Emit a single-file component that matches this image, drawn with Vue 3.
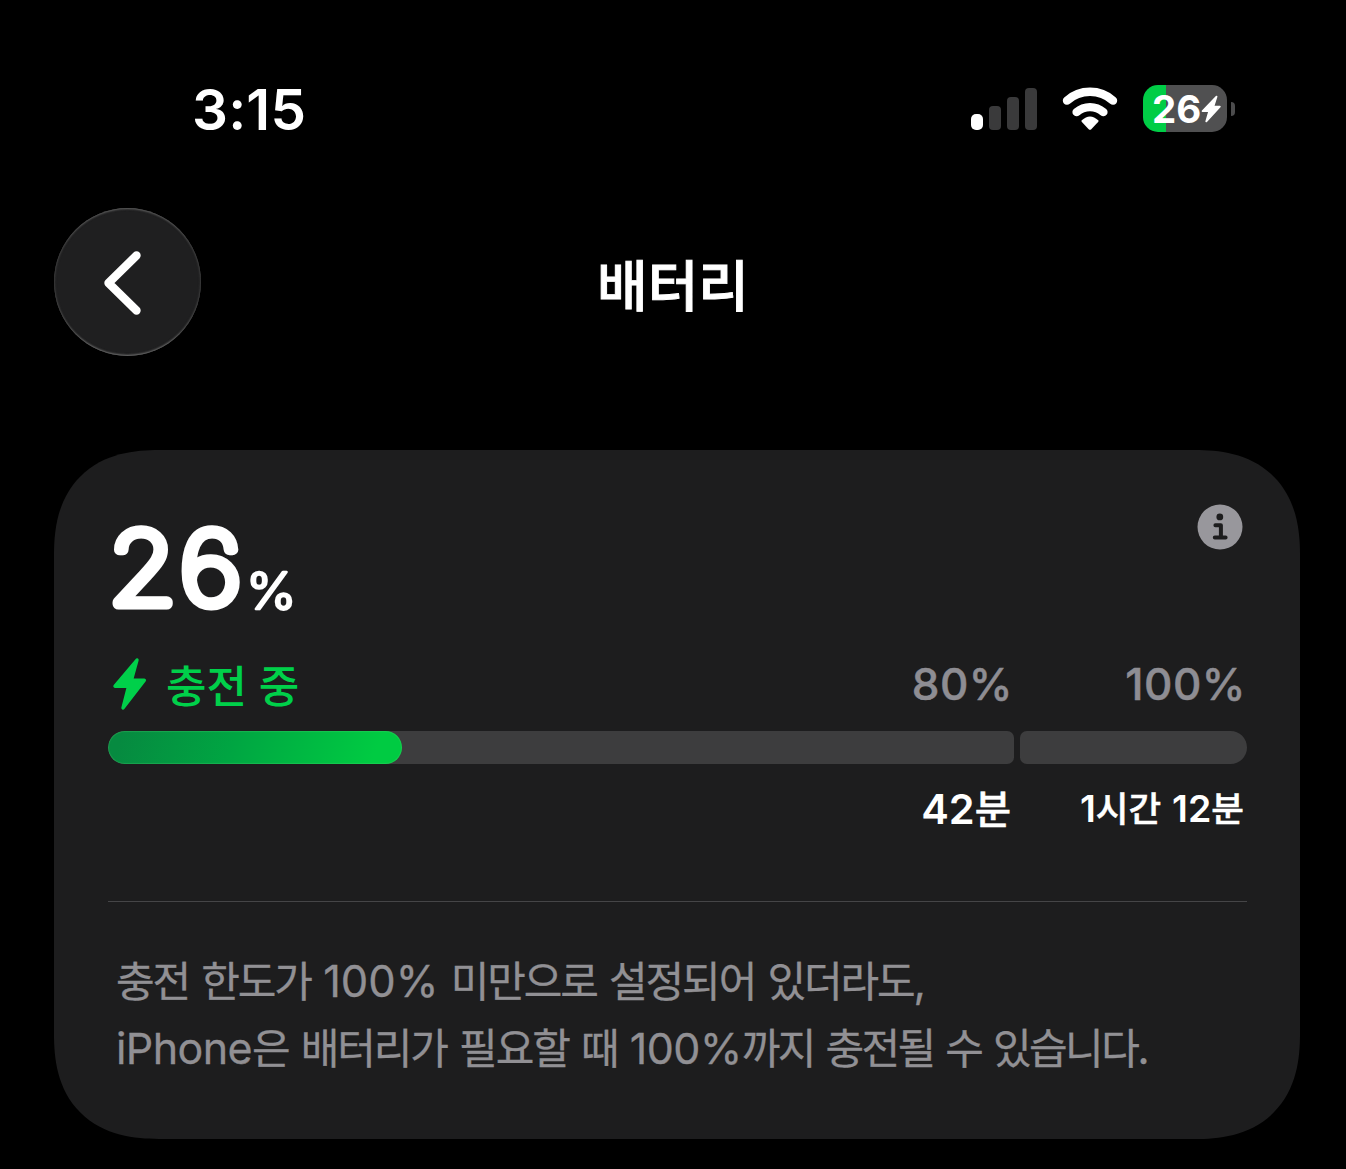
<script setup>
import { computed } from "vue";

const level = 26;
const limit = 80;

// 신호 막대 (높이 px)
const signalBars = [
  { height: 16, on: true },
  { height: 24, on: false },
  { height: 33, on: false },
  { height: 42, on: false },
];

// 첫 구간(0~80%) 안에서 채워지는 비율
const fillWidth = computed(() => `${(level / limit) * 100}%`);
</script>

<template>
  <div class="screen">
    <!-- 상태 표시줄 -->
    <header class="status-bar">
      <span class="time">3:15</span>
      <div class="status-icons">
        <div class="signal">
          <span
            v-for="bar in signalBars"
            :key="bar.height"
            class="signal-bar"
            :class="{ on: bar.on }"
            :style="{ height: `${bar.height}px` }"
          />
        </div>
        <svg class="wifi" viewBox="0 0 58 46">
          <g fill="none" stroke="#fff" stroke-width="8.4" stroke-linecap="round">
            <path d="M6 15.6A34.5 34.5 0 0 1 52 15.6" />
            <path d="M15.6 27.1A20.5 20.5 0 0 1 42.4 27.1" />
          </g>
          <path
            d="M20.8 35.2Q29 27.6 37.2 35.2Q38 36.1 37.1 37.1L30.3 44.2Q29 45.4 27.7 44.2L20.9 37.1Q20 36.1 20.8 35.2Z"
            fill="#fff"
          />
        </svg>
        <div class="battery">
          <div class="battery-body">
            <span class="battery-num">{{ level }}</span>
            <svg class="battery-bolt" viewBox="0 0 20 28">
              <path
                d="M15.5 1.7L1.6 16.2H8.2L5.3 26.3L18.8 11.6H12.3Z"
                fill="#fff"
                stroke="#fff"
                stroke-width="1.8"
                stroke-linejoin="round"
              />
            </svg>
          </div>
          <span class="battery-cap" />
        </div>
      </div>
    </header>

    <!-- 상단 내비게이션 -->
    <nav class="nav">
      <button class="back-btn">
        <svg viewBox="0 0 40 66">
          <path
            d="M33.5 5.5L5.5 33L33.5 60.5"
            fill="none"
            stroke="#fff"
            stroke-width="8.4"
            stroke-linecap="round"
            stroke-linejoin="round"
          />
        </svg>
      </button>
      <h1 class="title">배터리</h1>
    </nav>

    <!-- 배터리 카드 -->
    <section class="card">
      <div class="card-head">
        <svg class="level" viewBox="0 0 200 146">
          <text class="level-num" transform="translate(0.5 100) scale(1.1 1)">{{ level }}</text>
          <text class="level-unit" transform="translate(138 104.5) scale(1.06 1)">%</text>
        </svg>
        <svg class="info" viewBox="0 0 46 46">
          <circle cx="23" cy="23" r="22.5" fill="#98979c" />
          <circle cx="22.8" cy="12.9" r="3.4" fill="#1d1d1e" />
          <path
            d="M18.4 21.2H23.9V33M17.8 33.6H28.6"
            fill="none"
            stroke="#1d1d1e"
            stroke-width="4"
            stroke-linecap="round"
            stroke-linejoin="round"
          />
        </svg>
      </div>

      <div class="row">
        <div class="cell-main">
          <span class="charging">
            <svg class="bolt" viewBox="0 0 36 54">
              <path
                d="M25 3L3 29.2H16.6L11 51L32.4 23.3H19.4Z"
                fill="#00d04a"
                stroke="#00d04a"
                stroke-width="3.4"
                stroke-linejoin="round"
              />
            </svg>
            <span class="charging-text">충전 중</span>
          </span>
          <span class="percent">80%</span>
        </div>
        <div class="cell-rest">
          <span class="percent">100%</span>
        </div>
      </div>

      <div class="gauge">
        <div class="gauge-main">
          <div class="gauge-fill" :style="{ width: fillWidth }" />
        </div>
        <div class="gauge-rest" />
      </div>

      <div class="row times">
        <div class="cell-main">
          <span class="eta">42<span class="ko">분</span></span>
        </div>
        <div class="cell-rest">
          <span class="eta long"
            >1<span class="ko">시간</span> 12<span class="ko">분</span></span
          >
        </div>
      </div>

      <p class="note">
        <span class="line">충전 한도가 <i>100%</i> 미만으로 설정되어 있더라도<i>,</i></span>
        <span class="line"
          ><i class="word">iPhone</i>은 배터리가 필요할 때 <i class="tight">100%</i
          ><span class="tail">까지 충전될 수 있습니다<i>.</i></span></span
        >
      </p>
    </section>
  </div>
</template>

<style>
body {
  background: #000;
}
</style>

<style scoped>
.screen {
  box-sizing: border-box;
  width: 1346px;
  height: 1169px;
  overflow: hidden;
  padding-top: 79px;
  background: #000;
  color: #fff;
  font-family: Inter, "Noto Sans CJK KR", sans-serif;
}

/* 상태 표시줄 */
.status-bar {
  display: flex;
  justify-content: space-between;
  height: 60px;
  padding: 0 111px 0 192px;
}
.time {
  font-size: 56.5px;
  font-weight: 600;
  letter-spacing: 0.2px;
  line-height: 62px;
}
.status-icons {
  display: flex;
  align-items: flex-start;
}
.signal {
  display: flex;
  align-items: flex-end;
  gap: 6px;
  height: 42px;
  margin: 9px 24px 0 0;
}
.signal-bar {
  width: 12px;
  border-radius: 4px;
  background: #3a3a3b;
}
.signal-bar.on {
  border-radius: 5px;
  background: #fff;
}
.wifi {
  width: 58px;
  height: 46px;
  margin: 6px 24px 0 0;
}
.battery {
  display: flex;
  align-items: center;
  gap: 4px;
  margin-top: 6px;
}
.battery-body {
  display: flex;
  align-items: center;
  box-sizing: border-box;
  width: 84px;
  height: 47px;
  padding-left: 9px;
  border-radius: 15px;
  background: linear-gradient(90deg, #00cd46 23px, #505051 23px);
}
.battery-num {
  padding-top: 2px;
  font-size: 38.5px;
  font-weight: 700;
  line-height: 47px;
}
.battery-bolt {
  width: 20px;
  height: 28px;
}
.battery-cap {
  width: 4px;
  height: 14px;
  border-radius: 0 8px 8px 0;
  background: #4c4c4d;
}

/* 내비게이션 */
.nav {
  display: grid;
  grid-template-columns: 148px 1fr 148px;
  align-items: center;
  height: 148px;
  margin-top: 69px;
  padding: 0 54px;
}
.back-btn {
  display: flex;
  align-items: center;
  justify-content: center;
  width: 147px;
  height: 148px;
  padding: 2px 10px 0 0;
  border: none;
  border-radius: 50%;
  background: #1f1f20;
  box-shadow:
    inset 0 2px 2px -1px #5a5a5a,
    inset 0 -2px 2px -1px #6a6a6a,
    inset 0 0 2px 1px #363636;
}
.back-btn svg {
  width: 40px;
  height: 66px;
}
.title {
  margin: 0;
  padding-top: 7px;
  font-size: 55px;
  font-weight: 500;
  line-height: 80px;
  text-align: center;
  -webkit-text-stroke: 0.9px #fff;
}

/* 카드 */
.card {
  box-sizing: border-box;
  width: 1246px;
  height: 689px;
  margin: 94px 0 0 54px;
  padding: 54px 53px 0 54px;
  border-radius: 92px;
  background: #1d1d1e;
}
@supports (corner-shape: superellipse(1.26)) {
  .card {
    border-radius: 105px;
    corner-shape: superellipse(1.26);
  }
}
.card-head {
  display: flex;
  align-items: flex-start;
  justify-content: space-between;
  height: 146px;
  padding-right: 4px;
}
.level {
  width: 200px;
  height: 146px;
  overflow: visible;
}
.level-num {
  fill: #fff;
  stroke: #fff;
  stroke-width: 11px;
  stroke-linejoin: round;
  font-size: 99.5px;
  font-weight: 100;
  letter-spacing: 3px;
}
.level-unit {
  fill: #fff;
  stroke: #fff;
  stroke-width: 2.6px;
  stroke-linejoin: round;
  font-size: 51px;
  font-weight: 300;
}
.info {
  width: 46px;
  height: 46px;
}

.row {
  display: flex;
  gap: 6px;
  height: 68px;
}
.cell-main {
  display: flex;
  align-items: center;
  justify-content: space-between;
  box-sizing: border-box;
  width: 906px;
  padding: 0 2px 0 4px;
}
.cell-rest {
  display: flex;
  flex: 1;
  align-items: center;
  justify-content: flex-end;
  padding-right: 2px;
}
.charging {
  display: flex;
  align-items: center;
  gap: 18px;
  color: #00d04a;
}
.bolt {
  width: 36px;
  height: 54px;
}
.charging-text {
  padding-top: 5px;
  font-size: 44px;
  font-weight: 500;
  line-height: 68px;
}
.percent {
  margin-right: -1px;
  color: #8e8d93;
  font-size: 44px;
  font-weight: 500;
  letter-spacing: 0.5px;
  line-height: 68px;
  -webkit-text-stroke: 0.5px #8e8d93;
}

/* 충전 게이지 */
.gauge {
  display: flex;
  gap: 6px;
  height: 33px;
  margin-top: 13px;
}
.gauge-main {
  width: 906px;
  overflow: hidden;
  border-radius: 17px 7px 7px 17px;
  background: #3d3d3e;
}
.gauge-fill {
  box-sizing: border-box;
  height: 100%;
  border-radius: 17px;
  background: linear-gradient(110deg, #068a40 5%, #00a542 42%, #00cb42 90%);
  box-shadow: inset 0 0 1px 1px rgba(90, 220, 120, 0.25);
}
.gauge-rest {
  flex: 1;
  border-radius: 7px 17px 17px 7px;
  background: #3d3d3e;
}

.times {
  margin-top: 10px;
}
.times .cell-main {
  justify-content: flex-end;
}
.eta {
  margin-right: 1px;
  padding-top: 2px;
  font-size: 41.5px;
  font-weight: 600;
  line-height: 68px;
}
.eta .ko {
  font-size: 39.5px;
  font-weight: 500;
  -webkit-text-stroke: 0.5px #fff;
}
.eta.long {
  font-size: 37.5px;
  word-spacing: 1.5px;
}
.eta.long .ko {
  font-size: 35.5px;
}

/* 안내 문구 */
.note {
  margin: 59px 0 0;
  padding: 46px 0 0 8px;
  border-top: 1px solid #454547;
  color: #919094;
  font-size: 42px;
  line-height: 67px;
  -webkit-text-stroke: 0.3px #919094;
}
.line {
  display: block;
  letter-spacing: -2.1px;
  word-spacing: 2.5px;
  white-space: nowrap;
}
.line i {
  font-size: 43.5px;
  font-style: normal;
  letter-spacing: 0;
}
.line .word {
  font-size: 43px;
  letter-spacing: -0.6px;
}
.line .tight {
  font-size: 43px;
  letter-spacing: -0.5px;
}
.line .tail {
  letter-spacing: -2.6px;
}
</style>
